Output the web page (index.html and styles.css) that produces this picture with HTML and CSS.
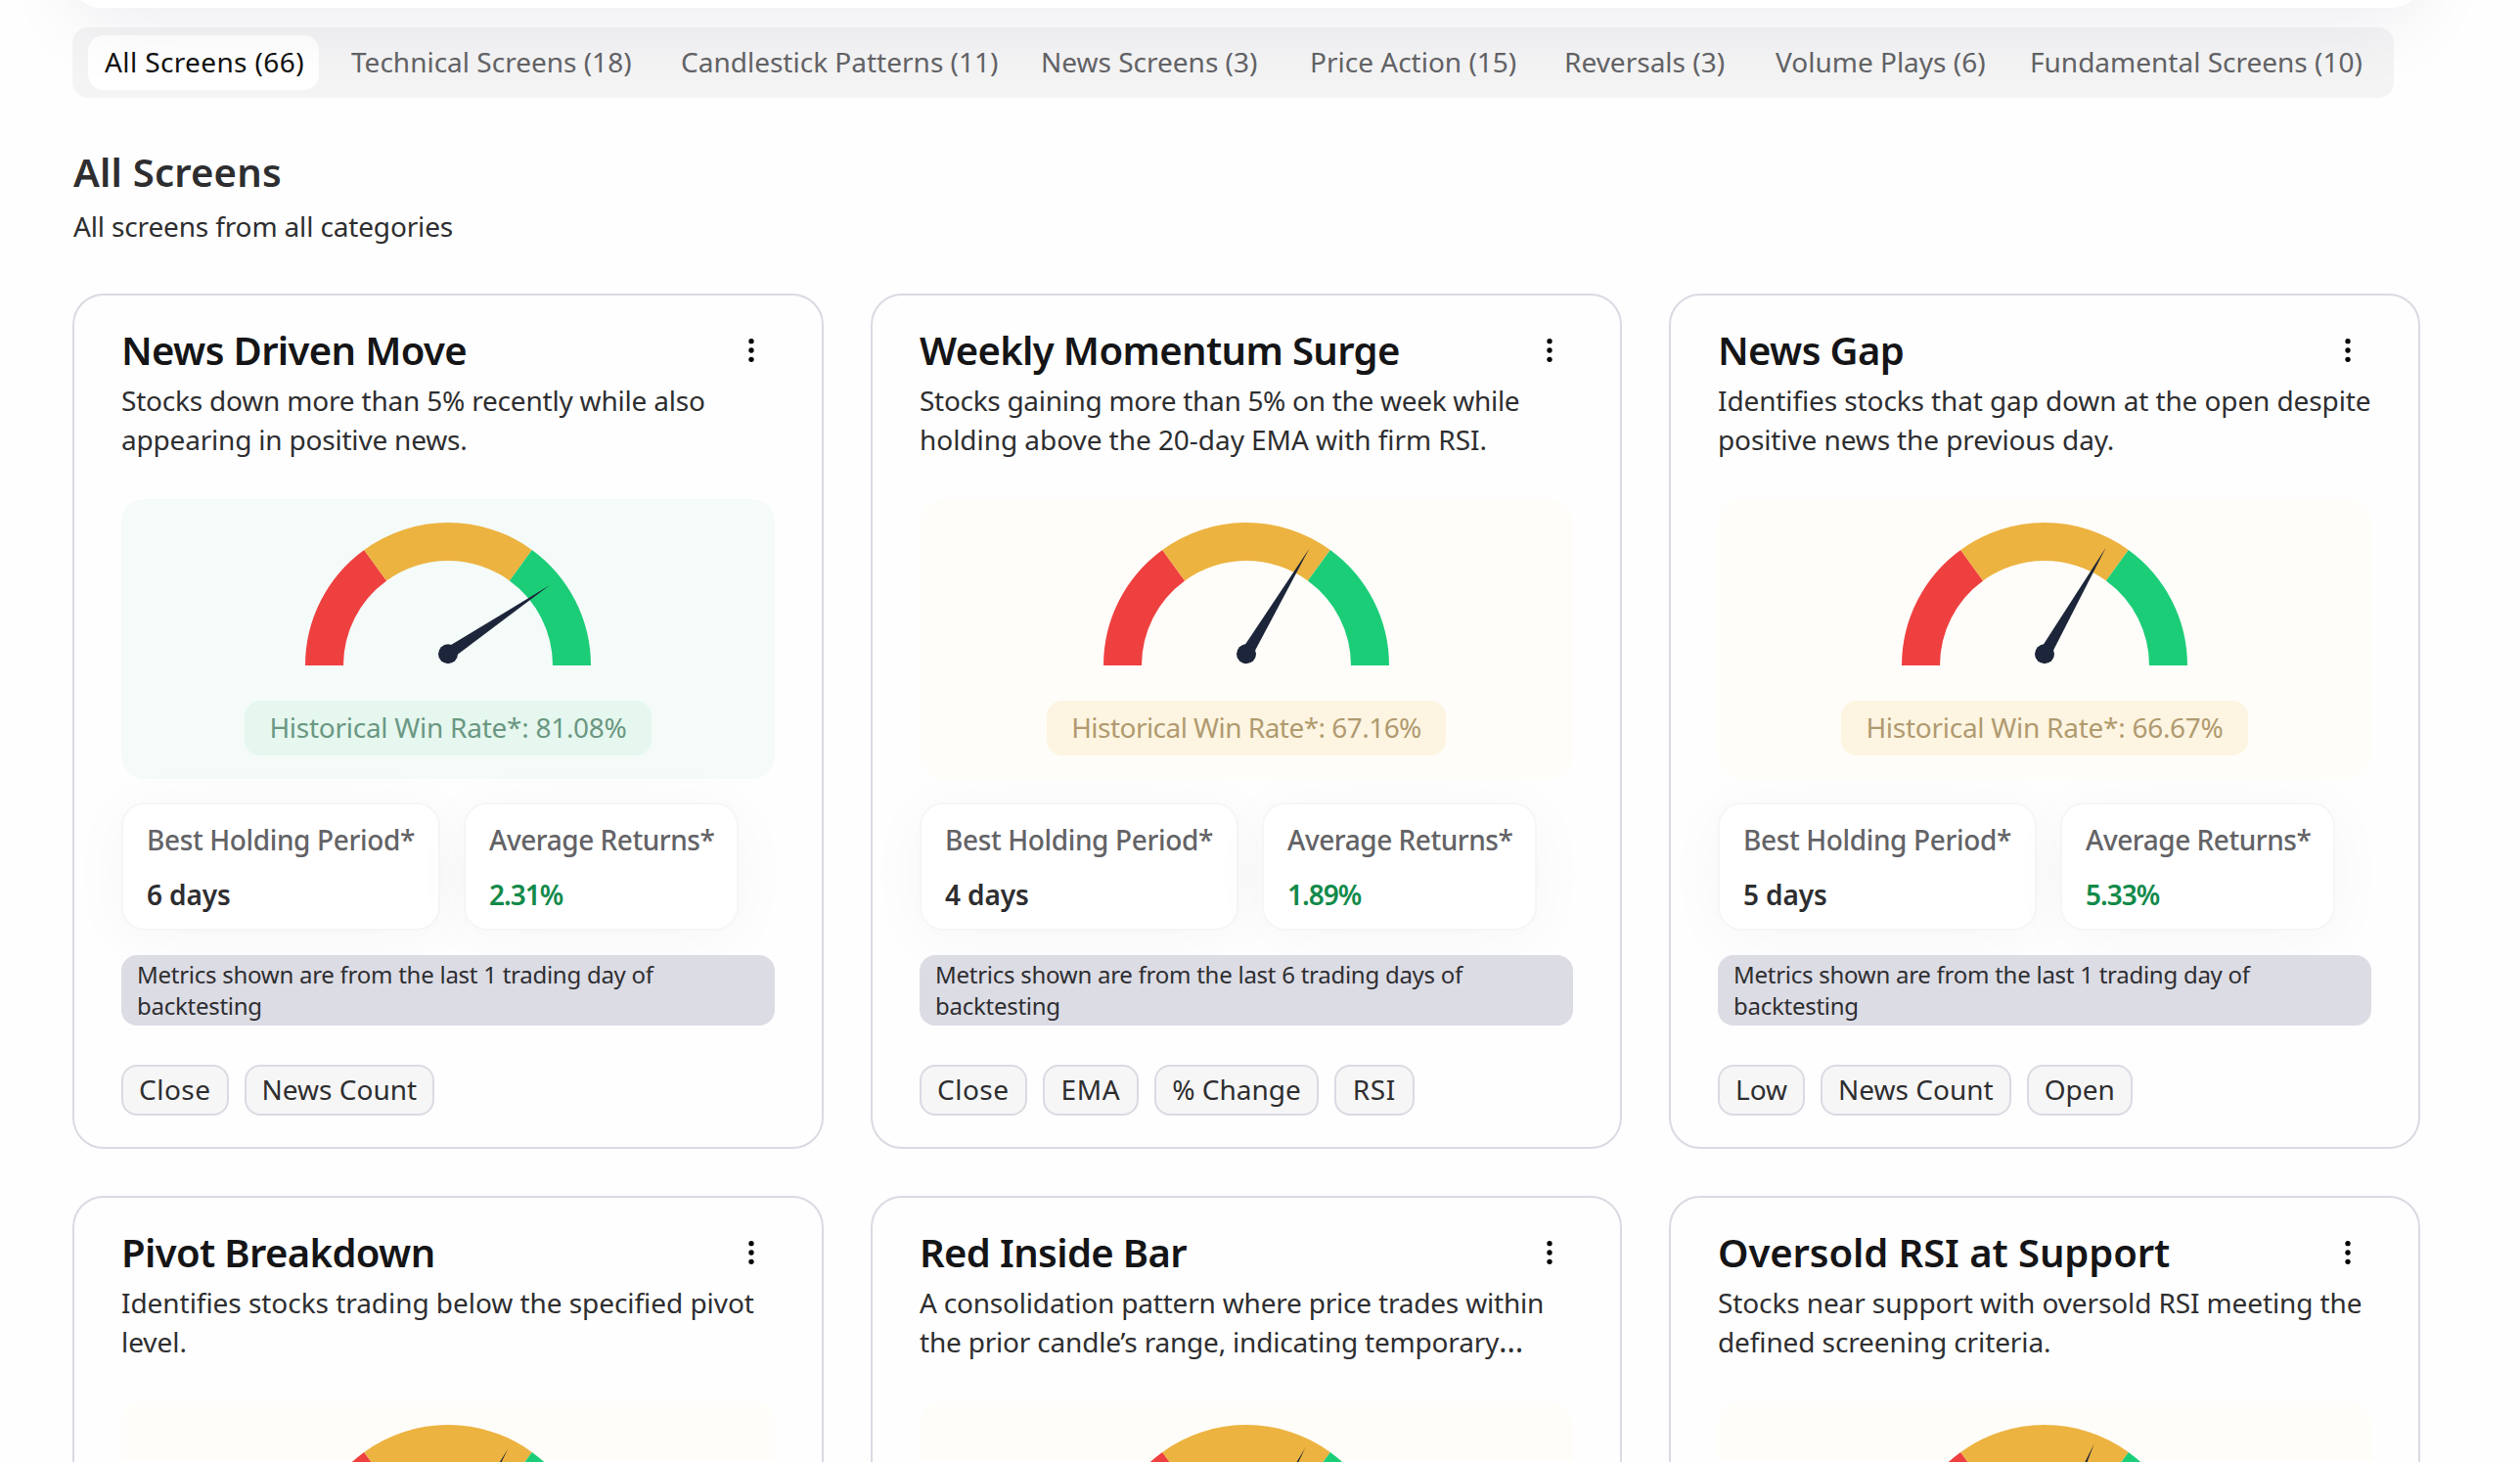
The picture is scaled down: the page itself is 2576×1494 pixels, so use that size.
FILE: index.html
```html
<!DOCTYPE html>
<html lang="en">
<head>
<meta charset="utf-8">
<title>All Screens</title>
<link rel="stylesheet" href="styles.css">
</head>
<body>
<svg class="defs" aria-hidden="true">
  <symbol id="arc" viewBox="0 0 292 146">
    <path fill="#ef4040" d="M0 146A146 146 0 0 1 60.2 27.9L83.1 59.4A107 107 0 0 0 39 146Z"/>
    <path fill="#ecb340" d="M60.2 27.9A146 146 0 0 1 231.8 27.9L208.9 59.4A107 107 0 0 0 83.1 59.4Z"/>
    <path fill="#1ccd78" d="M231.8 27.9A146 146 0 0 1 292 146H253A107 107 0 0 0 208.9 59.4Z"/>
  </symbol>
  <symbol id="more" viewBox="0 0 24 24">
    <circle cx="12" cy="5" r="2"/><circle cx="12" cy="12" r="2"/><circle cx="12" cy="19" r="2"/>
  </symbol>
</svg>
<div class="page">
  <header class="topbar"></header>
  <nav class="tabs">
    <a class="tab active">All Screens (66)</a>
    <a class="tab">Technical Screens (18)</a>
    <a class="tab">Candlestick Patterns (11)</a>
    <a class="tab">News Screens (3)</a>
    <a class="tab">Price Action (15)</a>
    <a class="tab">Reversals (3)</a>
    <a class="tab">Volume Plays (6)</a>
    <a class="tab">Fundamental Screens (10)</a>
  </nav>
  <h1 class="heading">All Screens</h1>
  <p class="subheading">All screens from all categories</p>
  <main class="grid">
    <article class="card">
      <div class="card-head"><h2 class="title">News Driven Move</h2><button class="menu" aria-label="More"><svg class="menu-icon"><use href="#more"/></svg></button></div>
      <p class="desc">Stocks down more than 5% recently while also<br>appearing in positive news.</p>
      <section class="panel good">
        <svg class="gauge" viewBox="0 0 292 146"><use href="#arc"/><g class="needle" transform="translate(146 134.3)"><path d="M0-6.3L125.5 0L0 6.3Z" transform="rotate(-34.1)"/><circle r="10"/></g></svg>
        <span class="rate">Historical Win Rate*: 81.08%</span>
      </section>
      <div class="stats">
        <div class="stat period"><span class="label">Best Holding Period*</span><b class="value">6 days</b></div>
        <div class="stat returns"><span class="label">Average Returns*</span><b class="value up">2.31%</b></div>
      </div>
      <p class="note">Metrics shown are from the last 1 trading day of<br>backtesting</p>
      <div class="tags"><span class="tag wide">Close</span><span class="tag">News Count</span></div>
    </article>
    <article class="card">
      <div class="card-head"><h2 class="title">Weekly Momentum Surge</h2><button class="menu" aria-label="More"><svg class="menu-icon"><use href="#more"/></svg></button></div>
      <p class="desc open"><span class="snug">Stocks gaining more than 5% on the week while</span><br>holding above the 20-day EMA with firm RSI.</p>
      <section class="panel fair">
        <svg class="gauge" viewBox="0 0 292 146"><use href="#arc"/><g class="needle" transform="translate(146 134.3)"><path d="M0-6.3L125.5 0L0 6.3Z" transform="rotate(-59.1)"/><circle r="10"/></g></svg>
        <span class="rate tight">Historical Win Rate*: 67.16%</span>
      </section>
      <div class="stats">
        <div class="stat period"><span class="label">Best Holding Period*</span><b class="value">4 days</b></div>
        <div class="stat returns"><span class="label">Average Returns*</span><b class="value up">1.89%</b></div>
      </div>
      <p class="note">Metrics shown are from the last 6 trading days of<br>backtesting</p>
      <div class="tags"><span class="tag wide">Close</span><span class="tag wider">EMA</span><span class="tag">% Change</span><span class="tag wider">RSI</span></div>
    </article>
    <article class="card">
      <div class="card-head"><h2 class="title">News Gap</h2><button class="menu" aria-label="More"><svg class="menu-icon"><use href="#more"/></svg></button></div>
      <p class="desc even">Identifies stocks that gap down at the open despite<br>positive news the previous day.</p>
      <section class="panel fair">
        <svg class="gauge" viewBox="0 0 292 146"><use href="#arc"/><g class="needle" transform="translate(146 134.3)"><path d="M0-6.3L125.5 0L0 6.3Z" transform="rotate(-60)"/><circle r="10"/></g></svg>
        <span class="rate">Historical Win Rate*: 66.67%</span>
      </section>
      <div class="stats">
        <div class="stat period"><span class="label">Best Holding Period*</span><b class="value">5 days</b></div>
        <div class="stat returns"><span class="label">Average Returns*</span><b class="value up">5.33%</b></div>
      </div>
      <p class="note">Metrics shown are from the last 1 trading day of<br>backtesting</p>
      <div class="tags"><span class="tag">Low</span><span class="tag">News Count</span><span class="tag">Open</span></div>
    </article>
    <article class="card">
      <div class="card-head"><h2 class="title">Pivot Breakdown</h2><button class="menu" aria-label="More"><svg class="menu-icon"><use href="#more"/></svg></button></div>
      <p class="desc open">Identifies stocks trading below the specified pivot<br>level.</p>
      <section class="panel fair">
        <svg class="gauge" viewBox="0 0 292 146"><use href="#arc"/><g class="needle" transform="translate(146 134.3)"><path d="M0-6.3L125.5 0L0 6.3Z" transform="rotate(-60.8)"/><circle r="10"/></g></svg>
      </section>
    </article>
    <article class="card">
      <div class="card-head"><h2 class="title">Red Inside Bar</h2><button class="menu" aria-label="More"><svg class="menu-icon"><use href="#more"/></svg></button></div>
      <p class="desc">A consolidation pattern where price trades within<br>the prior candle’s range, indicating temporary<span class="dots">…</span></p>
      <section class="panel fair">
        <svg class="gauge" viewBox="0 0 292 146"><use href="#arc"/><g class="needle" transform="translate(146 134.3)"><path d="M0-6.3L125.5 0L0 6.3Z" transform="rotate(-61.4)"/><circle r="10"/></g></svg>
      </section>
    </article>
    <article class="card">
      <div class="card-head"><h2 class="title loose">Oversold RSI at Support</h2><button class="menu" aria-label="More"><svg class="menu-icon"><use href="#more"/></svg></button></div>
      <p class="desc even">Stocks near support with oversold RSI meeting the<br>defined screening criteria.</p>
      <section class="panel fair">
        <svg class="gauge" viewBox="0 0 292 146"><use href="#arc"/><g class="needle" transform="translate(146 134.3)"><path d="M0-6.3L125.5 0L0 6.3Z" transform="rotate(-66.2)"/><circle r="10"/></g></svg>
      </section>
    </article>
  </main>
</div>
</body>
</html>
```
FILE: styles.css
```css
* { box-sizing: border-box; }
html, body { height: 100%; }
body {
  margin: 0;
  background: #fefefe;
  color: #2e2e30;
  font: 400 28px/40px "Noto Sans", sans-serif;
  overflow: hidden;
}
h1, h2, p { margin: 0; }
.defs { display: none; }
.page { height: 1494px; overflow: hidden; padding: 0 102px 0 74px; }

.topbar {
  position: relative;
  z-index: 1;
  width: 2400px;
  height: 208px;
  margin-top: -200px;
  border-radius: 28px;
  background: #fff;
  box-shadow: 0 16px 80px rgba(20, 20, 80, .065);
}

.tabs {
  display: grid;
  grid-template-columns: 236px 321px 352px 259px 244px 200px 244px 373px;
  gap: 16px;
  width: 2373px;
  height: 72px;
  margin-top: 20px;
  padding: 8px 16px;
  border-radius: 16px;
  background: #f4f4f5;
}
.tab {
  padding: 0 17px;
  border-radius: 16px;
  line-height: 55px;
  color: #636366;
  white-space: nowrap;
}
.tab.active { background: #fff; color: #111; letter-spacing: .38px; }

.heading {
  margin-top: 52px;
  padding-left: 1px;
  font-size: 40px;
  line-height: 48px;
  font-weight: 600;
  letter-spacing: .2px;
  color: #2e2e30;
}
.subheading { margin-top: 11px; padding-left: 1px; letter-spacing: -.15px; }

.grid {
  display: grid;
  grid-template-columns: repeat(3, 768px);
  grid-auto-rows: 874px;
  gap: 48px;
  margin-top: 49px;
}
.card {
  display: flex;
  flex-direction: column;
  padding: 32px 48px;
  border: 2px solid #dadae3;
  border-radius: 32px;
}
.card-head {
  display: flex;
  justify-content: space-between;
  align-items: center;
  height: 48px;
}
.title {
  font-size: 40px;
  line-height: 48px;
  font-weight: 600;
  letter-spacing: -.63px;
  color: #151517;
  white-space: nowrap;
}
.title.loose { letter-spacing: -.08px; }
.menu { display: flex; padding: 8px; border: 0; background: none; }
.menu-icon { width: 32px; height: 32px; fill: #000; }
.desc {
  height: 80px;
  margin-top: 7px;
  letter-spacing: -.2px;
  white-space: nowrap;
}
.desc.even { letter-spacing: -.11px; }
.desc.open { letter-spacing: -.05px; }
.snug { letter-spacing: -.3px; }
.dots { letter-spacing: 0; font-size: 32px; line-height: 1; }

.panel {
  display: flex;
  flex-direction: column;
  align-items: center;
  gap: 36px;
  flex: none;
  height: 286px;
  margin-top: 41px;
  padding: 24px;
  border-radius: 24px;
}
.panel.good { background: #f5fbf9; }
.panel.fair { background: #fffdf9; }
.gauge { width: 292px; height: 146px; }
.needle { fill: #1c2539; }
.rate {
  height: 56px;
  padding: 0 25px;
  border-radius: 16px;
  line-height: 55px;
  letter-spacing: -.27px;
  white-space: nowrap;
}
.rate.tight { letter-spacing: -.54px; }
.good .rate { background: #e5f7ee; color: #6b9783; }
.fair .rate { background: #fdf5e1; color: #b19a70; }

.stats { display: flex; gap: 24px; margin-top: 24px; }
.stat {
  display: flex;
  flex-direction: column;
  gap: 16px;
  height: 131px;
  padding: 16px 24px 0;
  border: 2px solid #f6f6f8;
  border-radius: 24px;
  background: #fff;
  box-shadow: 0 8px 64px rgba(20, 20, 60, .035);
}
.period { width: 326px; }
.returns { width: 281px; }
.label { font-weight: 500; letter-spacing: -.36px; color: #636366; white-space: nowrap; }
.returns .label { letter-spacing: -.45px; }
.value { font-weight: 600; letter-spacing: -.1px; }
.value.up { color: #128a4a; letter-spacing: -1px; }

.note {
  position: relative;
  height: 72px;
  margin-top: 25px;
  padding: 4px 16px;
  border-radius: 16px;
  background: #dcdce5;
  font-size: 24px;
  line-height: 32px;
  letter-spacing: -.26px;
}
.tags { display: flex; gap: 16px; margin-top: 40px; }
.tag {
  height: 52px;
  padding: 0 16px;
  border: 2px solid #dadae3;
  border-radius: 16px;
  background: #f6f6f6;
  line-height: 47px;
  white-space: nowrap;
}
.tag.wide { letter-spacing: .5px; }
.tag.wider { padding: 0 17px; letter-spacing: .6px; }
```
